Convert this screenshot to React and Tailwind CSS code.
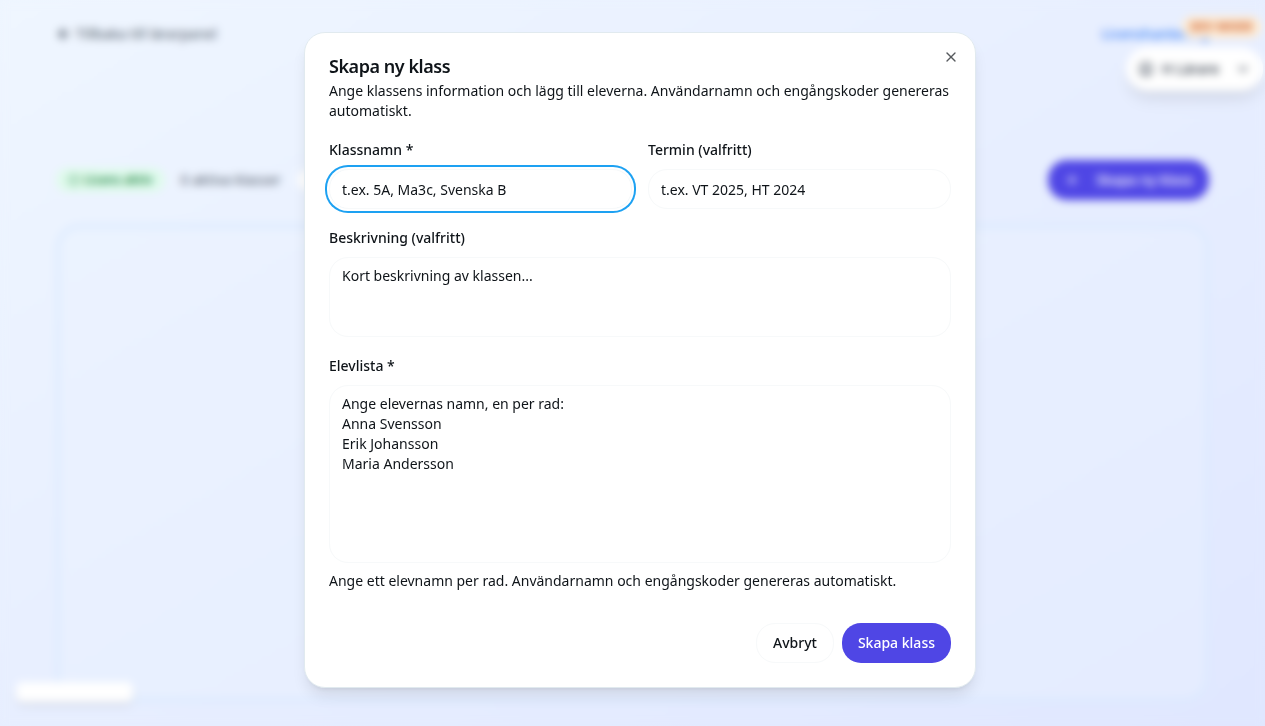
import { ArrowLeft, ChevronDown, CircleCheck, CircleUser, Plus, X } from "lucide-react";

const fieldClass =
  "block w-full rounded-[19px] border border-[#f7f9fa] bg-white px-3 py-2 text-sm text-[#0f1419] placeholder:text-[#0f1419] placeholder:opacity-100 outline-none";
const labelClass = "block text-sm leading-[26px] font-medium";

function ClassesPage() {
  return (
    <div className="flex min-h-screen flex-col bg-linear-to-br from-[#eff6ff] to-[#e0e7ff] px-14">
      <header className="flex items-center justify-between pt-6 text-sm">
        <a href="#panel" className="flex items-center gap-1 text-[#4b5563]">
          <ArrowLeft className="size-4" strokeWidth={3} />
          Tillbaka till lärarpanel
        </a>
        <a href="#licens" className="font-medium text-[#3b82f6]">
          Licenshantering
        </a>
      </header>
      <div className="mt-[116px] flex items-center justify-between">
        <div className="flex items-center gap-4 text-sm text-[#4b5563]">
          <span className="flex items-center gap-1 rounded-full bg-[#dcfce7]/80 px-3 py-1 text-xs font-semibold text-[#16803d]">
            <CircleCheck className="size-3" />
            Licens aktiv
          </span>
          <span>0 aktiva klasser</span>
          <span className="h-5 w-20 rounded-full bg-white" />
        </div>
        <button type="button" className="flex h-10 items-center gap-4 rounded-[19px] bg-[#4f46e5] px-4 text-sm font-medium text-white">
          <Plus className="size-4" />
          Skapa ny klass
        </button>
      </div>
      <section className="mt-6 mb-6 grow rounded-3xl border-4 border-[#dbeafe] bg-[#eaf3ff]/40" />
    </div>
  );
}

function FloatingControls() {
  return (
    <>
      <span className="fixed top-4 right-1 rounded-full bg-[#ffedd5] px-2 py-[3px] text-xs leading-4 font-bold text-[#c2410c]/80">
        DEV MODE
      </span>
      <button type="button" className="fixed top-[47px] right-0.5 flex h-11 items-center gap-2 rounded-full bg-white px-3 text-sm font-medium text-[#1f2937] shadow-lg">
        <CircleUser className="size-4 text-[#4b5563]" strokeWidth={2} />
        H Lärare
        <ChevronDown className="ml-2 size-4" />
      </button>
      <div className="fixed bottom-6 left-4 h-5 w-[117px] rounded-md bg-white shadow-md" />
    </>
  );
}

function CreateClassDialog() {
  return (
    <div className="fixed inset-0 flex items-center justify-center pb-[6px] pl-[15px] backdrop-blur-[4px]">
      <div
        role="dialog"
        aria-modal="true"
        aria-labelledby="dialog-title"
        aria-describedby="dialog-description"
        className="relative w-full max-w-2xl rounded-[21px] border border-[#e1eaef] bg-white p-6 text-[#0f1419] shadow-lg"
      >
        <button type="button" aria-label="Stäng" className="absolute top-4 right-4 opacity-70">
          <X className="size-4" />
        </button>
        <h2 id="dialog-title" className="text-lg leading-none font-semibold tracking-tight">
          Skapa ny klass
        </h2>
        <p id="dialog-description" className="mt-1.5 text-sm">
          Ange klassens information och lägg till eleverna. Användarnamn och engångskoder genereras automatiskt.
        </p>
        <form className="mt-4">
          <div className="flex flex-col gap-4">
            <div className="grid grid-cols-2 gap-4">
              <div className="space-y-1.5">
                <label htmlFor="name" className={labelClass}>Klassnamn *</label>
                <input
                  id="name"
                  placeholder="t.ex. 5A, Ma3c, Svenska B"
                  className={`${fieldClass} h-10 ring-2 ring-[#1da1f2] ring-offset-2 ring-offset-white`}
                />
              </div>
              <div className="space-y-1.5">
                <label htmlFor="term" className={labelClass}>Termin (valfritt)</label>
                <input id="term" placeholder="t.ex. VT 2025, HT 2024" className={`${fieldClass} h-10`} />
              </div>
            </div>
            <div className="space-y-1.5">
              <label htmlFor="description" className={labelClass}>Beskrivning (valfritt)</label>
              <textarea id="description" placeholder="Kort beskrivning av klassen..." className={`${fieldClass} h-20 resize-none`} />
            </div>
            <div className="space-y-1.5">
              <label htmlFor="students" className={labelClass}>Elevlista *</label>
              <textarea
                id="students"
                rows={8}
                placeholder={"Ange elevernas namn, en per rad:\nAnna Svensson\nErik Johansson\nMaria Andersson"}
                className={`${fieldClass} resize-none`}
              />
              <p className="pt-0.5 text-sm">
                Ange ett elevnamn per rad. Användarnamn och engångskoder genereras automatiskt.
              </p>
            </div>
          </div>
          <div className="mt-8 flex justify-end gap-2">
            <button type="button" className="h-10 rounded-[19px] border border-[#f7f9fa] bg-white px-4 text-sm font-medium">
              Avbryt
            </button>
            <button type="submit" className="h-10 rounded-[19px] bg-[#4f46e5] px-4 text-sm font-medium text-white">
              Skapa klass
            </button>
          </div>
        </form>
      </div>
    </div>
  );
}

export default function App() {
  return (
    <div className="font-['Noto_Sans',sans-serif]">
      <ClassesPage />
      <FloatingControls />
      <CreateClassDialog />
    </div>
  );
}
